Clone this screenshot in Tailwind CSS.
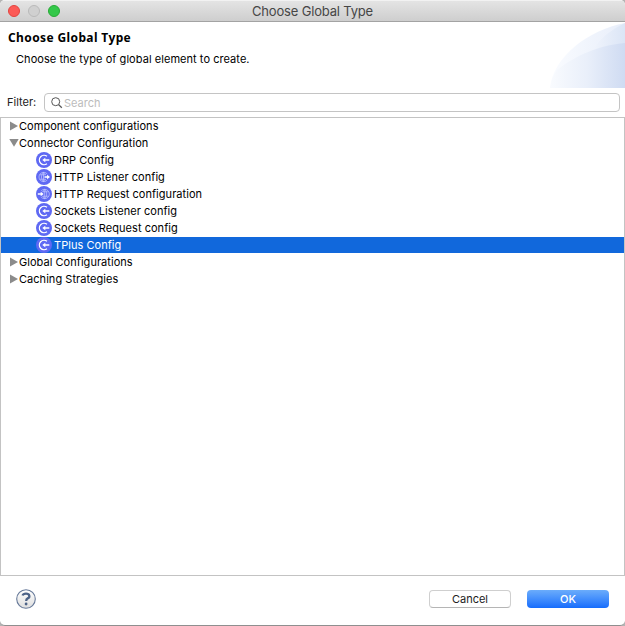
<!DOCTYPE html>
<html lang="en">
<head>
<meta charset="utf-8">
<title>Choose Global Type</title>
<script src="https://cdn.jsdelivr.net/npm/@tailwindcss/browser@4"></script>
</head>
<body class="bg-[#b4b4b4]">
<svg class="hidden">
  <defs>
    <symbol id="right" viewBox="0 0 8 10"><path d="M0 .5 8 5 0 9.500Z" fill="#8b8b8b"/></symbol>
    <symbol id="down" viewBox="0 0 10 8"><path d="M.3 0h9.400L5 7.800Z" fill="#8b8b8b"/></symbol>
    <symbol id="connector" viewBox="0 0 16 16">
      <circle cx="8" cy="8" r="8" fill="currentColor"/>
      <path d="M11 4.300A4.700 4.700 0 1 0 11 11.700" fill="none" stroke="#fff" stroke-width="1.300"/>
      <path d="M13.300 8H8" stroke="#fff" stroke-width="1.400"/>
      <path d="M9.300 5.800v4.400L6.300 8Z" fill="#fff"/>
    </symbol>
    <symbol id="listener" viewBox="0 0 16 16">
      <circle cx="8" cy="8" r="8" fill="currentColor"/>
      <g fill="none" stroke="#c3c8ff" stroke-width=".7"><path d="M11.300 5A4.700 4.700 0 1 0 11.300 11M7.500 3.300v9.400M7.500 3.300C4.800 6 4.800 10 7.500 12.700M7.500 3.300Q9 4.600 9.400 6M7.500 12.700Q9 11.400 9.400 10M3.700 5.800h6M3.700 10.200h6"/></g>
      <path d="M8.500 8h3" stroke="#fff" stroke-width="1.400"/><path d="M11 5.800v4.400L14 8Z" fill="#fff"/>
    </symbol>
    <symbol id="request" viewBox="0 0 16 16">
      <circle cx="8" cy="8" r="8" fill="currentColor"/>
      <g fill="none" stroke="#c3c8ff" stroke-width=".7"><path d="M5.200 4.800A4.700 4.700 0 1 1 5.200 11.200M8.700 3.300v9.400M8.700 3.300C11.400 6 11.400 10 8.700 12.700M8.700 3.300Q7.200 4.600 6.800 6M8.700 12.700Q7.200 11.400 6.800 10M6.500 5.800h6M6.500 10.200h6"/></g>
      <path d="M1.800 8h3.500" stroke="#fff" stroke-width="1.400"/><path d="M4.700 5.800v4.400L7.700 8Z" fill="#fff"/>
    </symbol>
  </defs>
</svg>
<main class="w-[625px] h-[626px] overflow-hidden flex flex-col bg-white rounded-t-[5px] rounded-b-[5px] border-b border-[#8f8f8f] font-[Inter,sans-serif] text-[11px] text-black">
  <header class="h-[22px] shrink-0 grid grid-cols-[1fr_auto_1fr] items-center bg-linear-to-b from-[#e4e4e4] to-[#cecece] border-t border-t-[#f2f2f2] border-b border-b-[#a3a3a3]">
    <div class="flex gap-2 pl-2">
      <i class="size-3 rounded-full bg-[#fc5b57] border border-[#e2443f]"></i>
      <i class="size-3 rounded-full bg-[#d0d0d0] border border-[#b9b9b9]"></i>
      <i class="size-3 rounded-full bg-[#34c84a] border border-[#27aa35]"></i>
    </div>
    <h1 class="text-[13px] leading-5 tracking-[-0.18px] text-[#464646]">Choose Global Type</h1>
    <div></div>
  </header>
  <section class="h-[66px] shrink-0 flex justify-between">
    <div class="pl-2 pt-2">
      <h2 class="font-['Noto_Sans',sans-serif] font-bold text-[12px] leading-4 tracking-[0.38px]">Choose Global Type</h2>
      <p class="pl-2 pt-[5px] leading-4 tracking-[0.05px]">Choose the type of global element to create.</p>
    </div>
    <svg width="75" height="66" viewBox="0 0 75 66">
      <defs>
        <linearGradient id="g1"><stop stop-color="#fafcff"/><stop offset="1" stop-color="#e8eefa"/></linearGradient>
        <linearGradient id="g2"><stop stop-color="#f9fbfe"/><stop offset=".5" stop-color="#e9effa"/><stop offset="1" stop-color="#cfdbf2"/></linearGradient>
        <linearGradient id="g3"><stop stop-color="#f0f4fc"/><stop offset="1" stop-color="#dbe5f6"/></linearGradient>
      </defs>
      <path d="M0 66C3 35 38 8 75 1V66Z" fill="url(#g1)"/>
      <path d="M43 28Q53 11 75 1V30H43Z" fill="url(#g3)"/>
      <path d="M0 66Q2 54 7 48C24 34 50 23 75 21V66Z" fill="url(#g2)"/>
    </svg>
  </section>
  <div class="h-[29px] shrink-0 flex pl-[7px] pr-[5px] pt-[5px]">
    <label for="search" class="w-[37px] leading-[19px] text-[#222]">Filter:</label>
    <div class="h-[19px] flex-1 border border-[#c4c4c4] rounded-[4px] flex items-center pl-[6px]">
      <svg class="size-[12px] mr-[1px] mt-px" viewBox="0 0 12 12" fill="none" stroke="#555" stroke-width="1"><circle cx="4.700" cy="4.700" r="4"/><path d="m7.600 7.600 3.200 3.200" stroke-width="1.300"/></svg>
      <span id="search" class="text-[#bcbcbc] leading-4 pt-px">Search</span>
    </div>
  </div>
  <section class="h-[459px] shrink-0 border border-[#c3c3c3] tracking-[0.04px]">
    <ul class="leading-4 flex flex-col gap-px">
      <li class="h-4 flex items-center pl-[9px] gap-px"><svg class="w-2 h-[10px]"><use href="#right"/></svg><span>Component configurations</span></li>
      <li class="h-4 flex items-center pl-2"><svg class="w-[10px] h-2"><use href="#down"/></svg><span>Connector Configuration</span></li>
      <li class="h-4 flex items-center pl-[35px] gap-[2px]"><svg class="size-4 text-[#5f69f3]"><use href="#connector"/></svg><span>DRP Config</span></li>
      <li class="h-4 flex items-center pl-[35px] gap-[2px]"><svg class="size-4 text-[#5f69f3]"><use href="#listener"/></svg><span>HTTP Listener config</span></li>
      <li class="h-4 flex items-center pl-[35px] gap-[2px]"><svg class="size-4 text-[#5f69f3]"><use href="#request"/></svg><span>HTTP Request configuration</span></li>
      <li class="h-4 flex items-center pl-[35px] gap-[2px]"><svg class="size-4 text-[#5f69f3]"><use href="#connector"/></svg><span>Sockets Listener config</span></li>
      <li class="h-4 flex items-center pl-[35px] gap-[2px]"><svg class="size-4 text-[#5f69f3]"><use href="#connector"/></svg><span>Sockets Request config</span></li>
      <li class="h-4 flex items-center pl-[35px] gap-[2px] bg-[#1168dc] text-white"><svg class="size-4 text-[#5f69f3]"><use href="#connector"/></svg><span>TPlus Config</span></li>
      <li class="h-4 flex items-center pl-[9px] gap-px"><svg class="w-2 h-[10px]"><use href="#right"/></svg><span>Global Configurations</span></li>
      <li class="h-4 flex items-center pl-[9px] gap-px"><svg class="w-2 h-[10px]"><use href="#right"/></svg><span>Caching Strategies</span></li>
    </ul>
  </section>
  <footer class="flex-1 flex items-start pl-4 pr-4 pt-[13px]">
    <svg class="size-5" viewBox="0 0 20 20"><defs><linearGradient id="h" x2="0" y2="1"><stop stop-color="#fff"/><stop offset="1" stop-color="#dedede"/></linearGradient></defs><circle cx="10" cy="10" r="9.300" fill="url(#h)" stroke="#667999" stroke-width="1.100"/><path d="M6.600 6.500Q7.200 4.700 10 4.700C14 4.700 14.200 8.300 11.700 9.400Q10.100 10.200 10.200 12" fill="none" stroke="#4d6387" stroke-width="2.300"/><circle cx="10.100" cy="15" r="1.400" fill="#4d6387"/></svg>
    <div class="ml-auto mt-px flex gap-4">
      <button class="w-[82px] h-[18px] rounded-[4px] border border-[#cfcfcf] border-b-[#b5b5b5] leading-4 text-[#222]">Cancel</button>
      <button class="w-[82px] h-[18px] rounded-[4px] bg-linear-to-b from-[#6bacfb] to-[#146cfc] leading-[18px] font-medium text-white">OK</button>
    </div>
  </footer>
</main>
</body>
</html>
